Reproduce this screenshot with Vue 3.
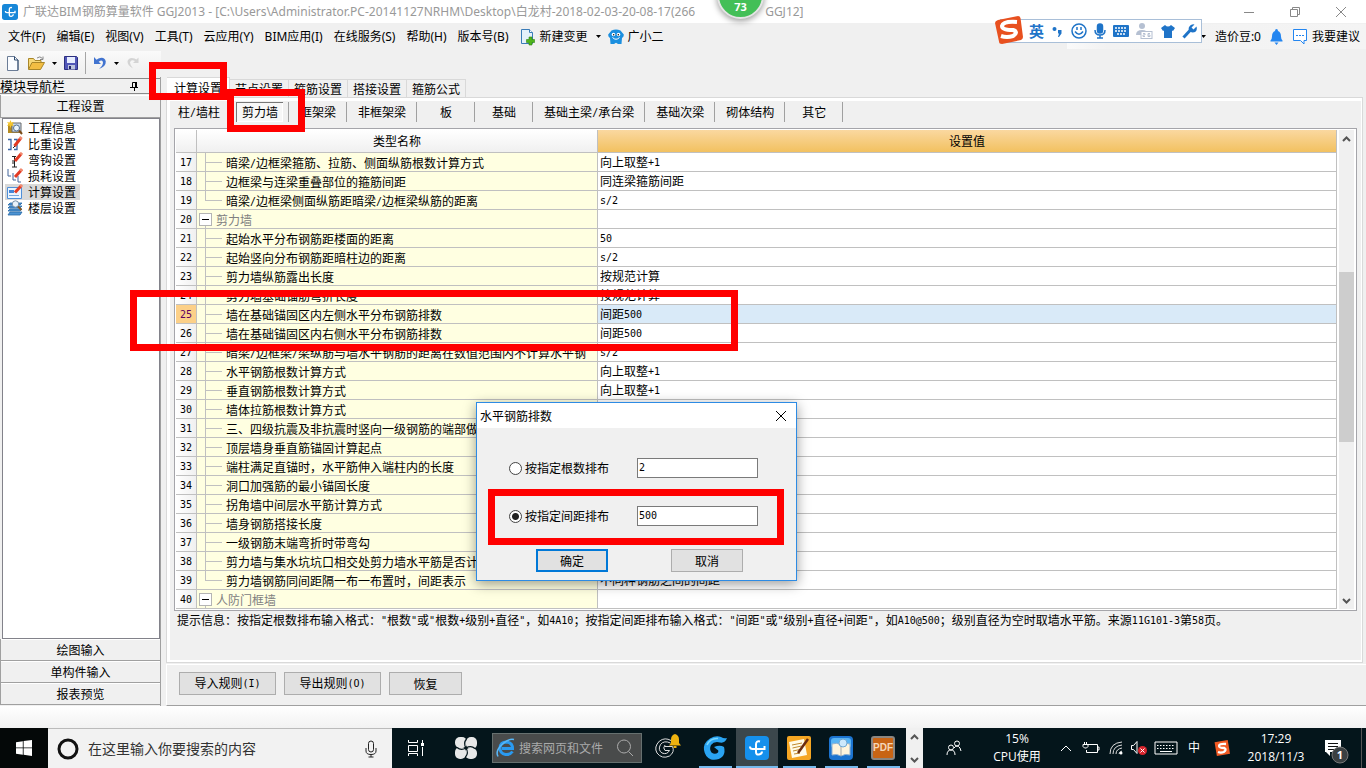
<script setup>
import { h, ref } from 'vue'

// Splits a string so that half-width characters are set in a fixed-pitch face.
const Song = (props) =>
  h('span', { class: 'song' }, props.t.split(/([\x21-\x7e]+)/).filter(Boolean).map((part) =>
    /^[\x21-\x7e]/.test(part) ? h('span', { class: 'half' }, part) : part))
Song.props = ['t']

const menus = ['文件(F)', '编辑(E)', '视图(V)', '工具(T)', '云应用(Y)', 'BIM应用(I)', '在线服务(S)', '帮助(H)', '版本号(B)']
const tabs = ['计算设置', '节点设置', '箍筋设置', '搭接设置', '箍筋公式']
const parts = ['柱/墙柱', '剪力墙', '框架梁', '非框架梁', '板', '基础', '基础主梁/承台梁', '基础次梁', '砌体结构', '其它']
const rows = [
  { n: 17, name: '暗梁/边框梁箍筋、拉筋、侧面纵筋根数计算方式', value: '向上取整+1' },
  { n: 18, name: '边框梁与连梁重叠部位的箍筋间距', value: '同连梁箍筋间距' },
  { n: 19, name: '暗梁/边框梁侧面纵筋距暗梁/边框梁纵筋的距离', value: 's/2', last: true },
  { n: 20, name: '剪力墙', value: '', group: true },
  { n: 21, name: '起始水平分布钢筋距楼面的距离', value: '50' },
  { n: 22, name: '起始竖向分布钢筋距暗柱边的距离', value: 's/2' },
  { n: 23, name: '剪力墙纵筋露出长度', value: '按规范计算' },
  { n: 24, name: '剪力墙基础锚筋弯折长度', value: '按规范计算' },
  { n: 25, name: '墙在基础锚固区内左侧水平分布钢筋排数', value: '间距500', current: true },
  { n: 26, name: '墙在基础锚固区内右侧水平分布钢筋排数', value: '间距500' },
  { n: 27, name: '暗梁/边框梁/梁纵筋与墙水平钢筋的距离在数值范围内不计算水平钢', value: 's/2' },
  { n: 28, name: '水平钢筋根数计算方式', value: '向上取整+1' },
  { n: 29, name: '垂直钢筋根数计算方式', value: '向上取整+1' },
  { n: 30, name: '墙体拉筋根数计算方式', value: '' },
  { n: 31, name: '三、四级抗震及非抗震时竖向一级钢筋的端部做', value: '' },
  { n: 32, name: '顶层墙身垂直筋锚固计算起点', value: '' },
  { n: 33, name: '端柱满足直锚时，水平筋伸入端柱内的长度', value: '' },
  { n: 34, name: '洞口加强筋的最小锚固长度', value: '' },
  { n: 35, name: '拐角墙中间层水平筋计算方式', value: '' },
  { n: 36, name: '墙身钢筋搭接长度', value: '' },
  { n: 37, name: '一级钢筋末端弯折时带弯勾', value: '' },
  { n: 38, name: '剪力墙与集水坑坑口相交处剪力墙水平筋是否计', value: '' },
  { n: 39, name: '剪力墙钢筋同间距隔一布一布置时，间距表示', value: '不同种钢筋之间的间距', last: true },
  { n: 40, name: '人防门框墙', value: '', group: true }
]
const mode = ref('spacing')
const count = ref('2')
const spacing = ref('500')
</script>

<template>
  <div class="window">
    <header class="titlebar">
      <svg class="logo" width="16" height="16" viewBox="0 0 24 24"><rect width="24" height="24" rx="4" fill="#1787d8" /><path d="M15 5.500Q11 4.500 11 8.500V16Q11 19 14 18.500 17 18 17 15.500M5 10.500Q5 13 7.500 13H19.500V10" fill="none" stroke="#fff" stroke-width="2" /></svg>
      <h1><span>广联达BIM钢筋算量软件 GGJ2013 - [C:\Users\Administrator.PC-20141127NRHM\Desktop\白龙村-2018-02-03-20-08-17(266</span><span class="ext">GGJ12]</span></h1>
      <div class="winbtns">
        <button aria-label="最小化"><svg width="12" height="12"><path d="M1 6.500H11" stroke="#888" /></svg></button>
        <button aria-label="还原"><svg width="12" height="12" fill="none" stroke="#888"><path d="M1.500 3.500h7v7h-7zM3.500 3V1.500h7v7H9" /></svg></button>
        <button aria-label="关闭"><svg width="12" height="12"><path d="M1 1L11 11M11 1L1 11" stroke="#888" /></svg></button>
      </div>
    </header>

    <nav class="menubar">
      <button v-for="m in menus" :key="m">{{ m }}</button>
      <button class="with-icon change">
        <svg width="16" height="18" viewBox="0 0 16 18"><path d="M1.500 1.500h8l3 3v11h-11z" fill="#e4f0fa" stroke="#3a7cb8" /><path d="M9.500 1.500v3h3" fill="#fff" stroke="#3a7cb8" /><path d="M9 9h3v2.500h2.500v3H12V17H9v-2.500H6.500v-3H9z" fill="#4fb41c" stroke="#2d8510" stroke-width=".6" /></svg>
        新建变更
        <svg class="drop" width="5" height="3"><path d="M0 0h5L2.500 3z" /></svg>
      </button>
      <button class="with-icon">
        <svg width="16" height="16" viewBox="0 0 16 16"><path d="M3.500 1.500Q8-.500 12.500 1.500L15.800 5.500Q16 8 14 9L13.500 15H10L8 13.800 6 15H2.500L2 9Q0 8 .200 5.500z" fill="#1b8fdf" /><circle cx="5.500" cy="5.500" r="1.800" fill="#fff" /><circle cx="10.500" cy="5.500" r="1.800" fill="#fff" /><circle cx="5.700" cy="5.700" r=".7" /><circle cx="10.300" cy="5.700" r=".7" /><path d="M4.500 8.500Q8 12 11.500 8.500" fill="none" stroke="#fff" /></svg>
        广小二
      </button>
      <div class="account">
        <svg class="drop" width="5" height="3"><path d="M0 0h5L2.500 3z" /></svg>
        <button>造价豆:0</button>
        <button aria-label="通知"><svg width="13" height="16" viewBox="0 0 13 16"><path d="M6.500 0Q8 0 8 2Q11 3 11 7.500Q11 10 12.500 11.500V12.500H.500V11.500Q2 10 2 7.500Q2 3 5 2Q5 0 6.500 0zM4.500 13.500h4L6.500 16z" fill="#2486f0" /></svg></button>
        <button class="with-icon advice"><svg width="16" height="16" viewBox="0 0 16 16"><path d="M1.500.500h13v11H12V15L8.500 11.500h-7z" fill="#fff" stroke="#2486f0" /><path d="M4 6.500h8" stroke="#2486f0" stroke-dasharray="2 1" /></svg>我要建议</button>
      </div>
    </nav>

    <div class="toolrow">
      <div class="toolbar">
        <button aria-label="新建"><svg width="12" height="15" viewBox="0 0 12 15"><path d="M.500.500h7l3.500 3.500v10.500H.500z" fill="#fafcff" stroke="#6b7c96" /><path d="M7.500.500V4H11v10" fill="none" stroke="#304c70" /></svg></button>
        <button aria-label="打开"><svg width="17" height="14" viewBox="0 0 17 14"><path d="M.500 13V2.500h5l1.500 2h6V6" fill="#f6d878" stroke="#a98628" /><path d="M.500 13.500L4 6.500h12.500L12.500 13.500z" fill="#f2bd42" stroke="#a98628" /><path d="M9 2Q12-.500 14.500 2.500M15 .500V3.500H12" fill="none" stroke="#888" /></svg></button>
        <svg class="drop" width="5" height="3"><path d="M0 0h5L2.500 3z" /></svg>
        <button aria-label="保存"><svg width="14" height="14" viewBox="0 0 14 14"><path d="M.500.500h12l1 1v12H.500z" fill="#5257b8" stroke="#2c2f80" /><path d="M3 1h8v6H3z" fill="#e7edff" /><path d="M4 9h7v4.500H4z" fill="#bcc3dd" /><path d="M5 10h2v3H5z" fill="#20246a" /></svg></button>
        <i class="sep"></i>
        <button aria-label="撤销"><svg width="14" height="14" viewBox="0 0 14 14"><path d="M1 1V8H8L5.700 5.700Q9.500 3 10 6.500 10 9.500 6 13 13 10.500 12.800 5.500 11.500.200 5.500 2.500L3.500 3.700z" fill="#4274d0" /></svg></button>
        <svg class="drop" width="5" height="3"><path d="M0 0h5L2.500 3z" /></svg>
        <button aria-label="重做"><svg width="14" height="14" viewBox="0 0 14 14"><path d="M12.500 1.500V7H7L9 5Q5 3 4 6.500 4 9 7 12.500 1 9 1.500 5 3.500.500 8.500 2.500L10.500 3.500z" fill="#d4d4d4" /></svg></button>
      </div>
    </div>

    <div class="workspace">
      <aside class="sidebar">
        <div class="dock"><span>模块导航栏</span><svg width="9" height="9" viewBox="0 0 9 9" fill="none" stroke="#000"><path d="M2.500 5V.500h3V5M0 5.500h8M4.500 5.500V9" /><path d="M6 0v5" stroke-width="2" /></svg></div>
        <button class="section">工程设置</button>
        <div class="nav">
          <button>
            <svg width="16" height="16" viewBox="0 0 16 16"><path d="M1 4h13v9H1z" fill="#b58b22" /><path d="M5 3h9v9H5z" fill="#c7d8ec" stroke="#6b6b6b" /><path d="M3.500 0l1 2.500L7 2 5.500 4 7 6 4.500 5.500 3.500 8 2.500 5.500 0 6 1.500 4 0 2 2.500 2.500z" fill="#f4c52c" /><circle cx="9.500" cy="8" r="3" fill="#e9f3fc" stroke="#54708e" /><path d="M12 10.500L15 14" stroke="#7a4b16" stroke-width="2" /></svg>工程信息</button>
          <button><svg width="16" height="16" viewBox="0 0 16 16" fill="none"><path d="M1 3.500h3v10H1M7 3.500h3v10H7" stroke="#3b66a6" stroke-width="1.300" /><path d="M7.500 10L13.500 2.500" stroke="#e33b24" stroke-width="3" /><path d="M13 3L14.500 1" stroke="#f08a70" stroke-width="3" /><path d="M6 12L8 10" stroke="#222" /></svg>比重设置</button>
          <button><svg width="16" height="16" viewBox="0 0 16 16" fill="none"><path d="M7.500 5v10M5 4.500h4M5 15h5M6 8v4" stroke="#222" /><path d="M8 9L14 2" stroke="#e33b24" stroke-width="3" /><path d="M13.500 2.500L15 .800" stroke="#f08a70" stroke-width="3" /></svg>弯钩设置</button>
          <button><svg width="16" height="16" viewBox="0 0 16 16" fill="none"><path d="M1 1v7h3M6 5v7h3M11 8v6h3" stroke="#42649a" /><path d="M8 9L14 2.500" stroke="#e33b24" stroke-width="3" /><path d="M13.500 3L15 1" stroke="#f08a70" stroke-width="3" /></svg>损耗设置</button>
          <button class="on"><svg width="16" height="16" viewBox="0 0 16 16" fill="none"><path d="M.500 3.500h14v11H.500z" fill="#eaf4ff" stroke="#4f8fd8" /><path d="M2 6h5v3H2z" fill="#4486d6" /><path d="M2 11.500h10" stroke="#78a8dc" /><path d="M8 8.500L14 2" stroke="#e33b24" stroke-width="3" /><path d="M13.500 2.500L15 .800" stroke="#f08a70" stroke-width="3" /></svg>计算设置</button>
          <button><svg width="16" height="16" viewBox="0 0 16 16"><path d="M3 3h12l-2 2H1zM3 6h12l-2 2H1zM3 9h12l-2 2H1zM3 12h12l-2 3H1z" fill="#4d94d4" stroke="#2567a6" stroke-width=".8" /><circle cx="8.500" cy="4" r="3.200" fill="#e8f2fa" stroke="#7791a8" /><path d="M11 6.500L14.500 10" stroke="#8a5a22" stroke-width="2" /></svg>楼层设置</button>
        </div>
        <button class="section">绘图输入</button>
        <button class="section">单构件输入</button>
        <button class="section">报表预览</button>
      </aside>

      <main class="main">
        <div class="tabs">
          <button v-for="(t, i) in tabs" :key="t" :class="{ on: i === 0 }">{{ t }}</button>
        </div>
        <section class="panel">
          <div class="parts">
            <button v-for="(p, i) in parts" :key="p" :class="{ on: i === 1 }"><Song :t="p" /></button>
          </div>
          <div class="grid">
            <table>
              <colgroup><col class="c-num"><col class="c-name"><col></colgroup>
              <thead><tr><th></th><th>类型名称</th><th class="value-head">设置值</th></tr></thead>
              <tbody>
                <tr v-for="r in rows" :key="r.n" :class="{ current: r.current }">
                  <td class="num"><Song :t="String(r.n)" /></td>
                  <td class="name">
                    <div class="tree" :class="{ group: r.group, last: r.last }">
                      <i class="branch"></i><Song :t="r.name" />
                    </div>
                  </td>
                  <td class="val"><Song :t="r.value" /></td>
                </tr>
              </tbody>
            </table>
            <div class="scroll">
              <button aria-label="向上滚动"><svg width="9" height="6"><path d="M1 5L4.500 1.500 8 5" fill="none" stroke="#555" stroke-width="2" /></svg></button>
              <div class="track"><div class="thumb"></div></div>
              <button aria-label="向下滚动"><svg width="9" height="6"><path d="M1 1L4.500 4.500 8 1" fill="none" stroke="#555" stroke-width="2" /></svg></button>
            </div>
          </div>
          <p class="hint"><Song t='提示信息：按指定根数排布输入格式："根数"或"根数+级别+直径"，如4A10；按指定间距排布输入格式："间距"或"级别+直径+间距"，如A10@500；级别直径为空时取墙水平筋。来源11G101-3第58页。' /></p>
        </section>
        <footer class="actions">
          <button class="btn wide"><Song t="导入规则(I)" /></button>
          <button class="btn wide"><Song t="导出规则(O)" /></button>
          <button class="btn">恢复</button>
        </footer>
      </main>
    </div>
    <div class="desk"></div>

    <div class="taskbar">
      <button class="start" aria-label="开始"><svg width="16" height="16" viewBox="0 0 16 16" fill="#fff"><path d="M0 2.200L6.800 1.200V7.500H0zM7.600 1.100L16 0V7.500H7.600zM0 8.300H6.800V14.700L0 13.700zM7.600 8.300H16V16L7.600 14.800z" /></svg></button>
      <label class="cortana">
        <svg width="22" height="22"><circle cx="11" cy="11" r="9" fill="none" stroke="#111" stroke-width="3" /></svg>
        <input type="text" placeholder="在这里输入你要搜索的内容" aria-label="搜索">
        <svg width="12" height="18" fill="none" stroke="#222"><rect x="3.500" y="1" width="5" height="11" rx="2.500" /><path d="M1 8v3q0 3.500 5 3.500t5-3.500V8M6 14.500V17M3.500 17h5" /></svg>
      </label>
      <button class="cell view" aria-label="任务视图"><svg width="18" height="16" fill="none" stroke="#fff"><path d="M1.500 0v2.500h9V0M1.500 5.500h9v6h-9zM1.500 16v-2.500h9V16M15.500 0v3M15.500 7v9" /><path d="M14 3h3v3h-3z" fill="#fff" stroke="none" /></svg></button>
      <button class="cell fan" aria-label="浏览器"><svg width="22" height="22" viewBox="0 0 22 22"><g fill="#e8e8e8"><rect width="12" height="11" rx="5" /><rect x="11" width="11" height="12" rx="5" /><rect x="10" y="11" width="12" height="11" rx="5" /><rect y="10" width="11" height="12" rx="5" /></g><path d="M11 11Q8 6 11.500 2M11 11Q16 8 20 11.500M11 11Q14 16 10.500 20M11 11Q6 14 2 10.500" fill="none" stroke="#04151b" stroke-width="1.200" /></svg></button>
      <label class="websearch">
        <svg width="20" height="20" viewBox="0 0 20 20" fill="none"><path d="M16.500 13.500Q14 17 9.500 16.500 4 15.500 4 10 4.500 4 10.500 4 16.500 4.500 16.500 10.500H6" stroke="#2a9af0" stroke-width="3" /><path d="M2 18.500Q-1 13 6 6.500 13 0 18 1.500" stroke="#58b8f8" stroke-width="1.500" /></svg>
        <input type="text" placeholder="搜索网页和文件" aria-label="搜索网页和文件">
        <svg width="18" height="18" fill="none" stroke="#aaa"><circle cx="8" cy="7.500" r="6.500" /><path d="M12.500 12.500L17 17" /></svg>
      </label>
      <button class="cell plain" aria-label="通知助手"><svg width="28" height="26" viewBox="0 0 28 26"><g fill="none" stroke="#ddd"><path d="M17 7.500Q11 4 5.500 8-.500 14 3 20 8 26.500 15.500 23 21 19 18.500 13.500H11M16.500 10Q10 7 6.500 11.500 3.500 17 8 20 13 22 15.500 17.500H11Q8.500 15 11 12" /></g><path d="M21 1Q25 2 25 6.500V10l2 2.500H15L17 10V6.500Q17 2 21 1zM19.500 13h3v2h-3z" fill="#efb310" /></svg></button>
      <button class="cell open" aria-label="广联达G"><svg width="26" height="26" viewBox="0 0 26 26"><path d="M25 3Q22 4 19 2 14 0 8 3.500 1 8 2 15 3 22 9 24.500 16 26 21 21 23.500 17 22 12 18 9.500 12 12L15 14.500Q17 15 16 17.500 13 20 9.500 17.500 7 14 9 10 12 6 18 7.500 23 8.500 25 3z" fill="#2aa4f2" /><path d="M5 10Q8 3 16 3.500" stroke="#7bd8ff" stroke-width="1.500" fill="none" /></svg></button>
      <button class="cell open active" aria-label="钢筋算量"><svg width="24" height="24" viewBox="0 0 24 24"><rect width="24" height="24" rx="4" fill="#1590ec" /><path d="M15 5.500Q11 4.500 11 8.500V16Q11 19 14 18.500 17 18 17 15.500M5 10.500Q5 13 7.500 13H19.500V10" fill="none" stroke="#fff" stroke-width="2" /></svg></button>
      <button class="cell open" aria-label="便笺"><svg width="24" height="24" viewBox="0 0 24 24"><rect width="24" height="24" rx="2" fill="#f5a623" /><path d="M2 6l15-3 3 16-15 3z" fill="#fffbe8" /><path d="M5 9l10-2M5.500 12l9-2M6 15l9-2M7 18l6-1" stroke="#c08a30" /><path d="M11 17L21 3" stroke="#6a2b10" stroke-width="2.500" /></svg></button>
      <button class="cell open" aria-label="图集"><svg width="24" height="24" viewBox="0 0 24 24"><rect width="24" height="24" rx="4" fill="#1c74d0" /><rect x="2" y="2" width="20" height="10" rx="3" fill="#58b4f4" /><path d="M3 8q5-2 9 1 4-3 9-1v11q-5-1.500-9 1-4-2.500-9-1z" fill="#fff4dc" stroke="#8fb0d0" /><path d="M12 9v11" stroke="#a8a8a8" /><circle cx="14" cy="7" r="4" fill="#cce8fc" stroke="#6fa8d4" /></svg></button>
      <button class="cell open"><span class="pdf">PDF</span></button>
      <div class="pager"><svg width="9" height="6"><path d="M1 5L4.500 1.500 8 5" fill="none" stroke="#555" stroke-width="2" /></svg><svg width="9" height="6"><path d="M1 1L4.500 4.500 8 1" fill="none" stroke="#555" stroke-width="2" /></svg></div>
      <div class="tray">
        <svg class="people" width="16" height="16" fill="none" stroke="#fff"><circle cx="5" cy="7.500" r="2.500" /><path d="M1 15q0-5 4-5t4 5" /><circle cx="11" cy="3.500" r="2.500" /><path d="M8 8q3-4 6 0l1 3" /></svg>
        <div class="cpu">15%<br>CPU使用</div>
        <svg class="up" width="12" height="8" fill="none" stroke="#fff"><path d="M1 7L6 2l5 5" /></svg>
        <svg class="battery" width="18" height="14" fill="none" stroke="#fff"><path d="M6 3.500h9.500v8H4.500V9M15.500 6h1.500v3h-1.500M1 3.500h5v2L4.500 7H2.500L1 5.500zM2.500 1v2M4.500 1v2" /></svg>
        <svg class="wifi" width="14" height="14" fill="none" stroke="#ddd"><path d="M1 13Q1 2 13 1M4 13Q4 5 13 4M7 13Q7 8 13 7M10 13Q10 11 13 10" /><circle cx="12" cy="12" r="1.500" fill="#fff" stroke="none" /></svg>
        <svg class="sound" width="18" height="16" fill="none" stroke="#fff"><path d="M1.500 5.500h2l3.500-4v12l-3.500-4h-2z" /><circle cx="12.500" cy="10.500" r="4.500" fill="#d9242c" stroke="none" /><path d="M10.500 8.500l4 4M14.500 8.500l-4 4" /></svg>
        <svg class="keys" width="24" height="14" fill="none" stroke="#fff"><path d="M1 1h22v12H1z" /><path d="M3 4.500h18M3 7.500h18" stroke-dasharray="1.500 1.500" /><path d="M6 10.500h12" /></svg>
        <span class="ime">中</span>
        <svg class="sogou-small" width="16" height="16" viewBox="0 0 28 28"><path d="M1 4L24 0 28 24 5 28z" fill="#f15a24" /><path d="M21 7Q8 6 9 11 10 14 18 14 23 17 17 21 12 23 7 21" fill="none" stroke="#fff" stroke-width="4" /></svg>
        <div class="clock">17:29<br>2018/11/3</div>
        <svg class="notice" width="26" height="26" viewBox="0 0 26 26"><path d="M1 2h16v12H6v4l-4-4H1z" fill="#fff" /><path d="M4 5.500h10M4 8.500h10M4 11.500h6" stroke="#111" /><circle cx="16" cy="17" r="8" fill="#3b4042" stroke="#777" /><text x="16" y="21" fill="#fff" font-size="11" font-weight="bold" text-anchor="middle" font-family="Open Sans, sans-serif">1</text></svg>
        <i class="edge"></i>
      </div>
    </div>

    <div class="ball">73</div>

    <div class="imebar">
      <svg class="sogou" width="28" height="28" viewBox="0 0 28 28"><path d="M3 4L23 0Q25 0 25.500 2L28 21Q28 23 26 24L7 28Q4 28 4 25.500L0 7Q0 5 3 4z" fill="#e8501f" /><path d="M22 6Q8 5 7 10 7 14 18 14 24 16 18 20 12 22 6 20" fill="none" stroke="#fff" stroke-width="4" /></svg>
      <b>英</b>
      <svg width="12" height="14" fill="#1f74c8"><circle cx="3.500" cy="5" r="2" /><path d="M7 6h3.500v3.500L8 13H7L8 9.500H7z" /></svg>
      <svg width="16" height="16" fill="none" stroke="#1f74c8" stroke-width="1.500"><circle cx="8" cy="8" r="7" /><path d="M4 8.500q4 5.500 8 0M6 4v3M10 4v3" /></svg>
      <svg width="12" height="16" fill="none" stroke="#1f74c8" stroke-width="1.500"><rect x="3.500" y="1" width="5" height="9" rx="2.500" fill="#1f74c8" /><path d="M1 7q0 5 5 5t5-5M6 12v3M3 15h6" /></svg>
      <svg width="16" height="12"><rect width="16" height="12" rx="1" fill="#1f74c8" /><path d="M2 3h12M2 6h12M4 9h8" stroke="#fff" stroke-width="1.500" stroke-dasharray="2 1" /></svg>
      <svg width="17" height="16" viewBox="0 0 17 16"><circle cx="6" cy="3" r="3" fill="#b5c0d2" /><path d="M0 12Q0 7 6 7t6 5z" fill="#b5c0d2" /><rect x="5" y="8.500" width="11" height="7" fill="#fff" stroke="#b5c0d2" /><path d="M7 10.500h2v1.500H7v1.500h2M14 10.500h-2v3h2V12h-2" fill="none" stroke="#b5c0d2" /></svg>
      <svg width="14" height="13"><path d="M4 0Q7 3 10 0L14 3 12 6 11 5.500V13H3V5.500L2 6 0 3z" fill="#1f74c8" /></svg>
      <svg width="15" height="15" viewBox="0 0 15 15"><path d="M1.500 13.500L8 6.500" stroke="#1f74c8" stroke-width="3" /><path d="M12.500.500L9.500 3.500 11.500 5.500 14.500 2.500Q16 8 10.500 8.500 5.500 8 7 3 9-.500 12.500.500z" fill="#1f74c8" /></svg>
    </div>

    <form class="dialog" role="dialog" aria-label="水平钢筋排数" @submit.prevent>
      <div class="dialog-title"><span>水平钢筋排数</span><button type="button" aria-label="关闭"><svg width="12" height="12"><path d="M1 1L11 11M11 1L1 11" stroke="#000" /></svg></button></div>
      <div class="dialog-body">
        <div class="field"><label><input v-model="mode" type="radio" name="mode" value="count">按指定根数排布</label><input v-model="count" type="text" aria-label="根数"></div>
        <div class="field"><label><input v-model="mode" type="radio" name="mode" value="spacing">按指定间距排布</label><input v-model="spacing" type="text" aria-label="间距"></div>
        <div class="dialog-actions"><button class="btn primary">确定</button><button type="button" class="btn">取消</button></div>
      </div>
    </form>

    <div class="mark m1"></div>
    <div class="mark m2"></div>
    <div class="mark m3"></div>
    <div class="mark m4"></div>
  </div>
</template>

<style>
body { margin: 0; }
.song { white-space: pre; }
.song .half { font-family: "DejaVu Sans Mono", monospace; font-size: 10px; vertical-align: 1px; }
</style>

<style scoped>
.window { position: relative; display: flex; flex-direction: column; min-height: 100vh; overflow: hidden; background: #f0f0f0; color: #000; font: 12px/16px "Noto Sans", "Noto Sans CJK SC", sans-serif; }
.window * { box-sizing: border-box; }
button { margin: 0; padding: 0; border: 0; background: none; font: inherit; color: inherit; white-space: nowrap; }
svg { display: block; flex: none; }
.titlebar { display: flex; align-items: center; height: 23px; padding-left: 2px; background: #fff; }
.titlebar h1 { flex: 1; margin: 0 0 0 5px; font-size: 12px; font-weight: 400; line-height: 22px; color: #999; white-space: nowrap; }
.ext { margin-left: 70px; }
.winbtns { display: flex; margin-right: 2px; }
.winbtns button { width: 46px; height: 20px; display: flex; align-items: center; justify-content: center; }
.menubar { display: flex; align-items: center; gap: 11px; height: 26px; padding: 1px 0 0 8px; }
.with-icon { display: flex; align-items: center; gap: 4px; }
.change .drop { margin-left: 4px; }
.change { margin-right: -4px; }
.account { display: flex; align-items: center; gap: 9px; height: 25px; margin-left: auto; padding: 0 6px 0 134px; background: linear-gradient(90deg, #fafafa, #f2f2f2 40px, #f4f4f4); }
.toolrow { height: 28px; padding-top: 2px; }
.toolbar { display: flex; align-items: center; gap: 7px; width: 161px; height: 24px; padding-left: 7px; background: linear-gradient(#fafafa, #efefef); }
.toolbar button { display: flex; }
.toolbar button:first-child { margin-right: 2px; }
.sep { width: 1px; height: 22px; background: #a5a5a5; }
.workspace { flex: 1; display: flex; font-family: "Noto Sans CJK SC", sans-serif; }
.sidebar { display: flex; flex-direction: column; flex: none; width: 161px; padding: 1px 0 1px; border-right: 1px solid #a0a0a0; }
.dock { display: flex; align-items: center; justify-content: space-between; height: 16px; margin-bottom: 1px; padding-right: 21px; border: solid #8a8a8a; border-width: 1px 0; font-size: 13px; line-height: 14px; }
.section { height: 22px; border: 1px solid #a0a0a0; border-width: 0 0 1px 1px; box-shadow: inset 0 1px #fff; }
.section:nth-of-type(1) { height: 23px; }
.nav { flex: 1; display: flex; flex-direction: column; align-items: flex-start; padding: 1px 2px; margin: 0 0 0 2px; border: 1px solid #82828a; background: #fff; }
.nav button { display: flex; align-items: center; gap: 5px; height: 16px; padding: 0 4px 0 2px; line-height: 16px; }
.nav .on { background: #d9d9d9; }
.main { flex: 1; min-width: 0; display: flex; flex-direction: column; margin-left: 5px; }
.tabs { display: flex; align-items: flex-end; height: 20px; padding-left: 1px; }
.tabs button { width: 59px; height: 18px; border: 1px solid #d9d9d9; border-width: 1px 1px 0 0; }
.tabs .on { width: 63px; height: 20px; background: #fff; }
.panel { flex: 1; margin-right: 3px; border: 1px solid #d9d9d9; box-shadow: inset 3px 3px #fff, inset -1px -2px #fff; padding: 4px 1px 2px 3px; }
.parts { display: flex; margin: 0 0 6px -3px; }
.parts button { min-width: 58px; height: 20px; padding: 0 10px 0 11px; border-right: 1px solid #a0a0a0; }
.parts .on { box-shadow: inset 5px 0 #f0f0f0, inset -5px 0 #f0f0f0, inset 6px 1px #777, inset -6px -1px #fff; background: #f7f7f7; }
.grid { display: flex; margin: 0 4px; border: 1px solid #a5a5aa; padding: 1px; background: #fff; }
table { flex: 1; min-width: 0; table-layout: fixed; border-collapse: separate; border-spacing: 0; }
.c-num { width: 21px; }
.c-name { width: 401px; }
th, td { padding: 0; border: solid #c0c0c0; border-width: 0 1px 1px 0; }
th { height: 23px; font-weight: 400; line-height: 22px; background: linear-gradient(#fff, #f0f0f0); }
.value-head { background: linear-gradient(#fad8a0, #f2c160); }
td { height: 19px; line-height: 18px; white-space: nowrap; overflow: hidden; }
td > .song, .tree { display: block; height: 18px; overflow: hidden; }
.num { text-align: center; background: linear-gradient(90deg, #fff, #f0f0f0); }
.name { background: #ffffe1; }
.val { padding-left: 2px; background: #fff; }
.current .num { background: #fcd088; color: #600060; }
.current .val { background: #d9eaf8; }
.tree { display: flex; line-height: 20px; padding-left: 8px; }
.branch { flex: none; width: 17px; height: 10px; margin-right: 4px; border: solid #c0c0c0; border-width: 0 0 1px 1px; }
.tree:not(.last):not(.group) { background: linear-gradient(#c0c0c0, #c0c0c0) 8px 0 / 1px 100% no-repeat; }
.group { padding-left: 2px; color: #808080; background: linear-gradient(#c0c0c0, #c0c0c0) 8px 16px / 1px 2px no-repeat; }
.group .branch { width: 13px; height: 13px; margin: 3px 4px 0 0; border: 1px solid #b4b4b4; background: linear-gradient(#000, #000) center / 7px 1px no-repeat #fff; }
.scroll { display: flex; flex-direction: column; width: 15px; margin: 0 1px 0 2px; background: #f0f0f0; }
.scroll button { height: 17px; display: flex; align-items: center; justify-content: center; }
.track { flex: 1; padding-top: 125px; }
.thumb { height: 170px; background: #cdcdcd; }
.hint { margin: 0 7px; line-height: 18px; }
.actions { display: flex; gap: 8px; height: 42px; margin-top: 1px; padding: 7px 12px 0; border: solid #fff; border-width: 1px 0 0 1px; border-bottom: 1px solid #a0a0a0; }
.btn { width: 73px; height: 23px; border: 1px solid #adadad; background: #e1e1e1; font-family: "Noto Sans CJK SC", sans-serif; line-height: 20px; }
.wide { width: 97px; }
.desk { height: 22px; background: linear-gradient(#fff, #f2f2f2); }
.taskbar { display: flex; height: 40px; background: #04151b; color: #fff; font-family: "Open Sans", "Noto Sans CJK SC", sans-serif; }
.start { width: 48px; display: flex; align-items: center; justify-content: center; background: #040808; }
.cortana { display: flex; align-items: center; width: 344px; padding: 0 15px 0 9px; border-top: 1px solid #bbb; background: #f2f2f2; }
.cortana input { flex: 1; min-width: 0; margin-left: 9px; padding: 0 0 2px; border: 0; background: none; font: 14px/20px "Noto Sans CJK SC", sans-serif; }
.cortana input::placeholder { color: #333; opacity: 1; }
.cell { display: flex; align-items: center; justify-content: center; width: 42px; }
.view { width: 48px; }
.fan { width: 52px; }
.websearch { display: flex; align-items: center; width: 150px; height: 30px; margin: 5px 0 0; padding: 0 7px 0 3px; border: 1px solid #66706f; background: #494b4b; }
.websearch input { flex: 1; min-width: 0; padding: 0; margin-left: 3px; border: 0; background: none; font: 12px/18px "Noto Sans CJK SC", sans-serif; }
.websearch input::placeholder { color: #aaa; opacity: 1; }
.plain { width: 52px; padding-bottom: 4px; }
.open { background: linear-gradient(#76b9ed, #76b9ed) center bottom / 33px 2px no-repeat; }
.active { background: linear-gradient(#76b9ed, #76b9ed) center bottom / 42px 2px no-repeat #3b474c; }
.pdf { width: 24px; height: 24px; border: 2px solid #8b8680; border-radius: 3px; background: #c86414; font: bold 10px/20px "Liberation Sans", sans-serif; color: #f5d7b8; }
.pager { display: flex; flex-direction: column; align-items: center; justify-content: space-between; width: 17px; margin-left: 2px; padding: 6px 0 5px; background: #f0f0f0; }
.tray { display: flex; align-items: center; margin-left: auto; }
.cpu, .clock { text-align: center; line-height: 18px; white-space: nowrap; }
.cpu { width: 60px; margin-left: 25px; }
.up { margin-left: 13px; }
.battery { margin-left: 10px; }
.wifi { margin-left: 9px; }
.sound { margin-left: 7px; }
.keys { margin-left: 6px; }
.ime { margin-left: 10px; }
.sogou-small { margin-left: 14px; }
.clock { width: 66px; margin-left: 13px; }
.notice { margin: 6px 11px 0 15px; }
.edge { width: 1px; height: 40px; margin-right: 4px; background: #555; }
.ball { position: absolute; left: 717px; top: -28px; width: 47px; height: 47px; border: 2px solid #e4e4e4; border-radius: 50%; background: #43bf57; box-shadow: 0 2px 6px #0006; color: #fff; font: bold 11px/16px "Open Sans", sans-serif; text-align: center; padding-top: 25px; }
.imebar { position: absolute; left: 1000px; top: 19px; display: flex; align-items: center; justify-content: space-between; width: 202px; height: 24px; padding: 0 4px 0 28px; border: 1px solid #a9bfd8; background: #fff; color: #1f74c8; }
.imebar b { font: bold 15px/20px "Noto Sans CJK SC", sans-serif; }
.sogou { position: absolute; left: -6px; top: -4px; }
.dialog { position: absolute; left: 476px; top: 402px; width: 321px; border: 1px solid #2d8be4; background: #f0f0f0; box-shadow: 0 3px 12px #0006; font-family: "Noto Sans CJK SC", sans-serif; }
.dialog-title { display: flex; align-items: center; justify-content: space-between; height: 25px; padding: 0 9px 0 3px; background: #fff; }
.dialog-body { padding: 30px 32px 8px; }
.field { display: flex; align-items: center; height: 20px; margin-bottom: 28px; }
.field label { display: flex; align-items: center; width: 128px; height: 20px; }
.field input[type="radio"] { appearance: none; flex: none; width: 13px; height: 13px; margin: 0 3px 0 0; border: 1px solid #444; border-radius: 50%; background: #fff; }
.field input[type="radio"]:checked { background: radial-gradient(circle, #222 3px, #fff 4px); }
.field input[type="text"] { width: 121px; height: 20px; padding: 0 2px 2px 1px; border: 1px solid #7a7a7a; background: #fff; font: 10px/16px "DejaVu Sans Mono", monospace; }
.dialog-actions { display: flex; gap: 63px; margin-top: -5px; padding-left: 27px; }
.dialog-actions .btn { width: 72px; }
.btn.primary { border: 2px solid #0078d7; line-height: 18px; }
.mark { position: absolute; border: 7px solid #f00; pointer-events: none; }
.m1 { left: 149px; top: 62px; width: 78px; height: 38px; }
.m2 { left: 227px; top: 89px; width: 78px; height: 43px; }
.m3 { left: 130px; top: 290px; width: 608px; height: 61px; }
.m4 { left: 488px; top: 489px; width: 296px; height: 56px; }
</style>
